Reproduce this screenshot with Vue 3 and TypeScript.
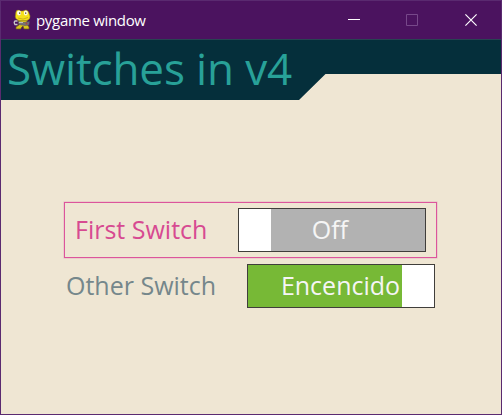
<script setup lang="ts">
import { ref } from 'vue'

interface SwitchItem {
  label: string
  text: string
  on: boolean
}

const items = ref<SwitchItem[]>([
  { label: 'First Switch', text: 'Off', on: false },
  { label: 'Other Switch', text: 'Encencido', on: true },
])
const selected = ref(0)

function toggle(index: number) {
  const item = items.value[index]
  selected.value = index
  item.on = !item.on
}
</script>

<template>
  <main class="window">
    <header class="titlebar">
      <svg class="logo" width="18" height="21" viewBox="0 0 18 21">
        <path d="M5 11H14L14 15L16 18V20H11L10 17L8 19V20H3V18L6 16Z" fill="#d9c41c" stroke="#6e5d1a" stroke-width=".7" />
        <path d="M3 2.5Q4.500 0 7.500 2L10 2Q14 0 15.500 3L17 7Q17.500 10 14 11.500L6 11.500Q1.500 10 2.500 6Z" fill="#f6e11c" stroke="#9c8a1b" stroke-width=".6" />
        <ellipse cx="6" cy="4" rx="2" ry="2.400" fill="#fffce8" />
        <ellipse cx="12.800" cy="4" rx="2" ry="2.400" fill="#fffce8" />
        <path d="M6 3.500h1.300v1.300H6zM12 3.500h1.300v1.300H12z" fill="#4a3d22" />
        <path d="M5 9Q10 11.500 15 8.500" fill="none" stroke="#c1a716" stroke-width=".8" />
        <path d="M5 12.500L11 13.500L16.500 12.500L16 16L12 16.500L6 15.500Z" fill="#77737a" stroke="#514b56" stroke-width=".5" />
        <path d="M4.500 12H2Q.5 13.500 2 15.500H4.500" fill="none" stroke="#c9c9c9" stroke-width="1.300" />
        <path d="M6 13.500H10" stroke="#bcbcbc" />
        <circle cx="13.500" cy="14.500" r="1" fill="#a8473e" />
      </svg>
      <span class="caption">pygame window</span>
      <div class="controls">
        <svg width="12" height="12" viewBox="0 0 12 12"><path d="M0 5.500H12" stroke="#fff" /></svg>
        <svg width="12" height="12" viewBox="0 0 12 12"><path d="M.5 .5H11.500V11.500H.5Z" fill="none" stroke="#77488a" /></svg>
        <svg class="close" width="12" height="12" viewBox="0 0 12 12"><path d="M.4 .4L11.600 11.600M11.600 .4L.4 11.600" stroke="#fff" stroke-width="1.150" /></svg>
      </div>
    </header>
    <section class="surface">
      <div class="banner"><h1>Switches in v4</h1></div>
      <div class="menu">
        <div v-for="(item, i) in items" :key="item.label" class="row" :class="{ selected: i === selected }">
          <span class="label">{{ item.label }}</span>
          <button class="switch" :class="{ on: item.on }" @click="toggle(i)">
            <span class="state">{{ item.text }}</span>
            <span class="knob"></span>
          </button>
        </div>
      </div>
    </section>
  </main>
</template>

<style>
body {
  margin: 0;
  overflow: hidden;
}
</style>

<style scoped>
.window {
  box-sizing: border-box;
  width: 502px;
  height: 415px;
  border: 1px solid #5a2a70;
  background: #efe6d3;
  font-family: 'Open Sans', 'Noto Sans', sans-serif;
}
.titlebar {
  display: flex;
  align-items: center;
  box-sizing: border-box;
  height: 38px;
  padding: 0 24px 0 12px;
  background: #4b135f;
}
.logo {
  flex: none;
  margin-top: -1px;
}
.caption {
  margin-left: 5px;
  color: #fff;
  font-size: 15px;
  letter-spacing: -0.32px;
  line-height: 20px;
  margin-top: -1px;
  white-space: nowrap;
}
.controls {
  display: flex;
  gap: 46px;
  margin-left: auto;
}
.controls svg {
  display: block;
}
.close {
  margin-left: 1px;
}
.surface {
  height: 375px;
}
.banner {
  box-sizing: border-box;
  height: 61px;
  border-top: 1px solid #284452;
  background: #052f3b;
  clip-path: polygon(0 0, 100% 0, 100% 35px, 324.500px 35px, 298px 100%, 0 100%);
}
h1 {
  margin: 0;
  padding-left: 6px;
  color: #28a198;
  font-size: 44px;
  font-weight: 400;
  letter-spacing: -0.12px;
  line-height: 57px;
  white-space: nowrap;
}
.menu {
  display: flex;
  flex-direction: column;
  align-items: flex-start;
  padding: 102px 0 0 63px;
}
.row {
  display: flex;
  align-items: center;
  box-sizing: border-box;
  height: 56px;
  padding-left: 2px;
  color: #75878b;
  gap: 31px;
}
.row.selected {
  width: 373px;
  padding-left: 10px;
  border: 1px solid #dc559c;
  box-shadow: 0 0 0 0.500px #dc559c55;
  color: #d74a91;
}
.label {
  padding-bottom: 2px;
  font-size: 25px;
  line-height: 34px;
  white-space: nowrap;
}
.row .label {
  width: 150px;
}
.row.selected .label {
  width: 132px;
}
.switch {
  display: flex;
  align-items: stretch;
  box-sizing: border-box;
  width: 188px;
  height: 44px;
  padding: 0;
  border: 1px solid #403e3b;
  background: #b2b2b2;
  color: #f5f5f5;
  font: 25px/41px 'Open Sans', 'Noto Sans', sans-serif;
}
.switch.on {
  background: #77b936;
}
.knob {
  flex: none;
  order: -1;
  width: 32px;
  background: #fff;
}
.state {
  flex: 1;
  padding-right: 36px;
  text-align: center;
}
.on .knob {
  order: 1;
}
.on .state {
  padding: 0 0 0 31px;
}
</style>
